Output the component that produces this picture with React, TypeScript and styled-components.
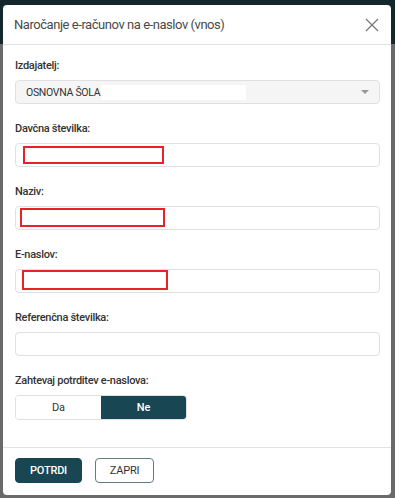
import React from 'react';
import styled, { createGlobalStyle } from 'styled-components';

const GlobalStyle = createGlobalStyle`
  html, body {
    margin: 0;
    padding: 0;
  }
  body {
    font-family: Roboto, "Noto Sans", sans-serif;
    background: #6c6c6c;
  }
`;

const Backdrop = styled.div`
  width: 395px;
  height: 498px;
  background: linear-gradient(to bottom, #13272c 0, #13272c 44px, #6a6a6a 44px);
  overflow: hidden;
`;

const Modal = styled.div`
  margin: 5px 0 0 3px;
  width: 388px;
  height: 490px;
  display: flex;
  flex-direction: column;
  background: #fff;
  border-radius: 4px;
`;

const Header = styled.div`
  height: 39px;
  display: flex;
  align-items: center;
  justify-content: space-between;
  padding: 0 12px 0 11px;
  border-bottom: 1px solid #dfe3e8;
`;

const Title = styled.h2`
  margin: 0;
  font-size: 13px;
  letter-spacing: -0.45px;
  font-weight: 400;
  color: #4a4a4a;
`;

const CloseButton = styled.button`
  border: 0;
  background: none;
  padding: 0;
  width: 14px;
  height: 14px;
  display: flex;
  color: #7a7a7a;
  cursor: pointer;
`;

const Body = styled.div`
  flex: 1;
  padding: 14px 11px 0 12px;
  display: flex;
  flex-direction: column;
  gap: 18px;
`;

const Field = styled.div`
  display: flex;
  flex-direction: column;
  gap: 7px;
`;

const Label = styled.label`
  font-size: 11px;
  line-height: 14px;
  letter-spacing: -0.3px;
  font-weight: 500;
  color: #333;
`;

const Input = styled.div`
  position: relative;
  height: 24px;
  box-sizing: border-box;
  border: 1px solid #dde1e6;
  border-radius: 4px;
  background: #fff;
`;

const Select = styled(Input)`
  background: #f5f5f5;
  display: flex;
  align-items: center;
  padding: 0 10px;
  font-size: 10.5px;
  letter-spacing: -0.3px;
  color: #333;
`;

const Caret = styled.span`
  margin-left: auto;
  width: 0;
  height: 0;
  border-left: 4px solid transparent;
  border-right: 4px solid transparent;
  border-top: 4px solid #999;
`;

const WhiteMask = styled.span`
  margin-left: 1px;
  width: 145px;
  height: 15px;
  background: #fff;
`;

const Redaction = styled.span<{ $left: number; $top: number; $width: number; $height: number }>`
  position: absolute;
  left: ${(p) => p.$left}px;
  top: ${(p) => p.$top}px;
  width: ${(p) => p.$width}px;
  height: ${(p) => p.$height}px;
  box-sizing: border-box;
  border: 2px solid #e82229;
`;

const Toggle = styled.div`
  display: flex;
  width: 172px;
  height: 25px;
  box-sizing: border-box;
  border: 1px solid #dde1e6;
  border-radius: 4px;
  overflow: hidden;
`;

const ToggleOption = styled.button<{ $active?: boolean }>`
  flex: 1;
  border: 0;
  margin: 0;
  font-family: inherit;
  font-size: 11px;
  letter-spacing: -0.2px;
  font-weight: ${(p) => (p.$active ? 500 : 400)};
  background: ${(p) => (p.$active ? '#184753' : '#fff')};
  color: ${(p) => (p.$active ? '#fff' : '#333')};
`;

const Footer = styled.div`
  border-top: 1px solid #dfe3e8;
  padding: 10px 12px 12px;
  display: flex;
  gap: 13px;
`;

const Button = styled.button<{ $primary?: boolean }>`
  height: 25px;
  width: ${(p) => (p.$primary ? 67 : 59)}px;
  padding: 0;
  border-radius: 4px;
  font-family: inherit;
  font-size: 11px;
  letter-spacing: -0.2px;
  font-weight: ${(p) => (p.$primary ? 500 : 400)};
  border: 1px solid ${(p) => (p.$primary ? '#184753' : '#5f7c84')};
  background: ${(p) => (p.$primary ? '#184753' : '#fff')};
  color: ${(p) => (p.$primary ? '#fff' : '#333')};
`;

export default function App() {
  return (
    <Backdrop>
      <GlobalStyle />
      <Modal>
        <Header>
          <Title>Naročanje e-računov na e-naslov (vnos)</Title>
          <CloseButton aria-label="Zapri">
            <svg width="14" height="14" viewBox="0 0 14 14" fill="none" stroke="currentColor" strokeWidth="1.3">
              <path d="M1 1L13 13M13 1L1 13" />
            </svg>
          </CloseButton>
        </Header>
        <Body>
          <Field>
            <Label>Izdajatelj:</Label>
            <Select>
              OSNOVNA ŠOLA
              <WhiteMask />
              <Caret />
            </Select>
          </Field>
          <Field>
            <Label>Davčna številka:</Label>
            <Input>
              <Redaction $left={7} $top={2} $width={141} $height={18} />
            </Input>
          </Field>
          <Field>
            <Label>Naziv:</Label>
            <Input>
              <Redaction $left={4} $top={1} $width={145} $height={19} />
            </Input>
          </Field>
          <Field>
            <Label>E-naslov:</Label>
            <Input>
              <Redaction $left={6} $top={0} $width={146} $height={20} />
            </Input>
          </Field>
          <Field>
            <Label>Referenčna številka:</Label>
            <Input />
          </Field>
          <Field>
            <Label>Zahtevaj potrditev e-naslova:</Label>
            <Toggle>
              <ToggleOption>Da</ToggleOption>
              <ToggleOption $active>Ne</ToggleOption>
            </Toggle>
          </Field>
        </Body>
        <Footer>
          <Button $primary>POTRDI</Button>
          <Button>ZAPRI</Button>
        </Footer>
      </Modal>
    </Backdrop>
  );
}
